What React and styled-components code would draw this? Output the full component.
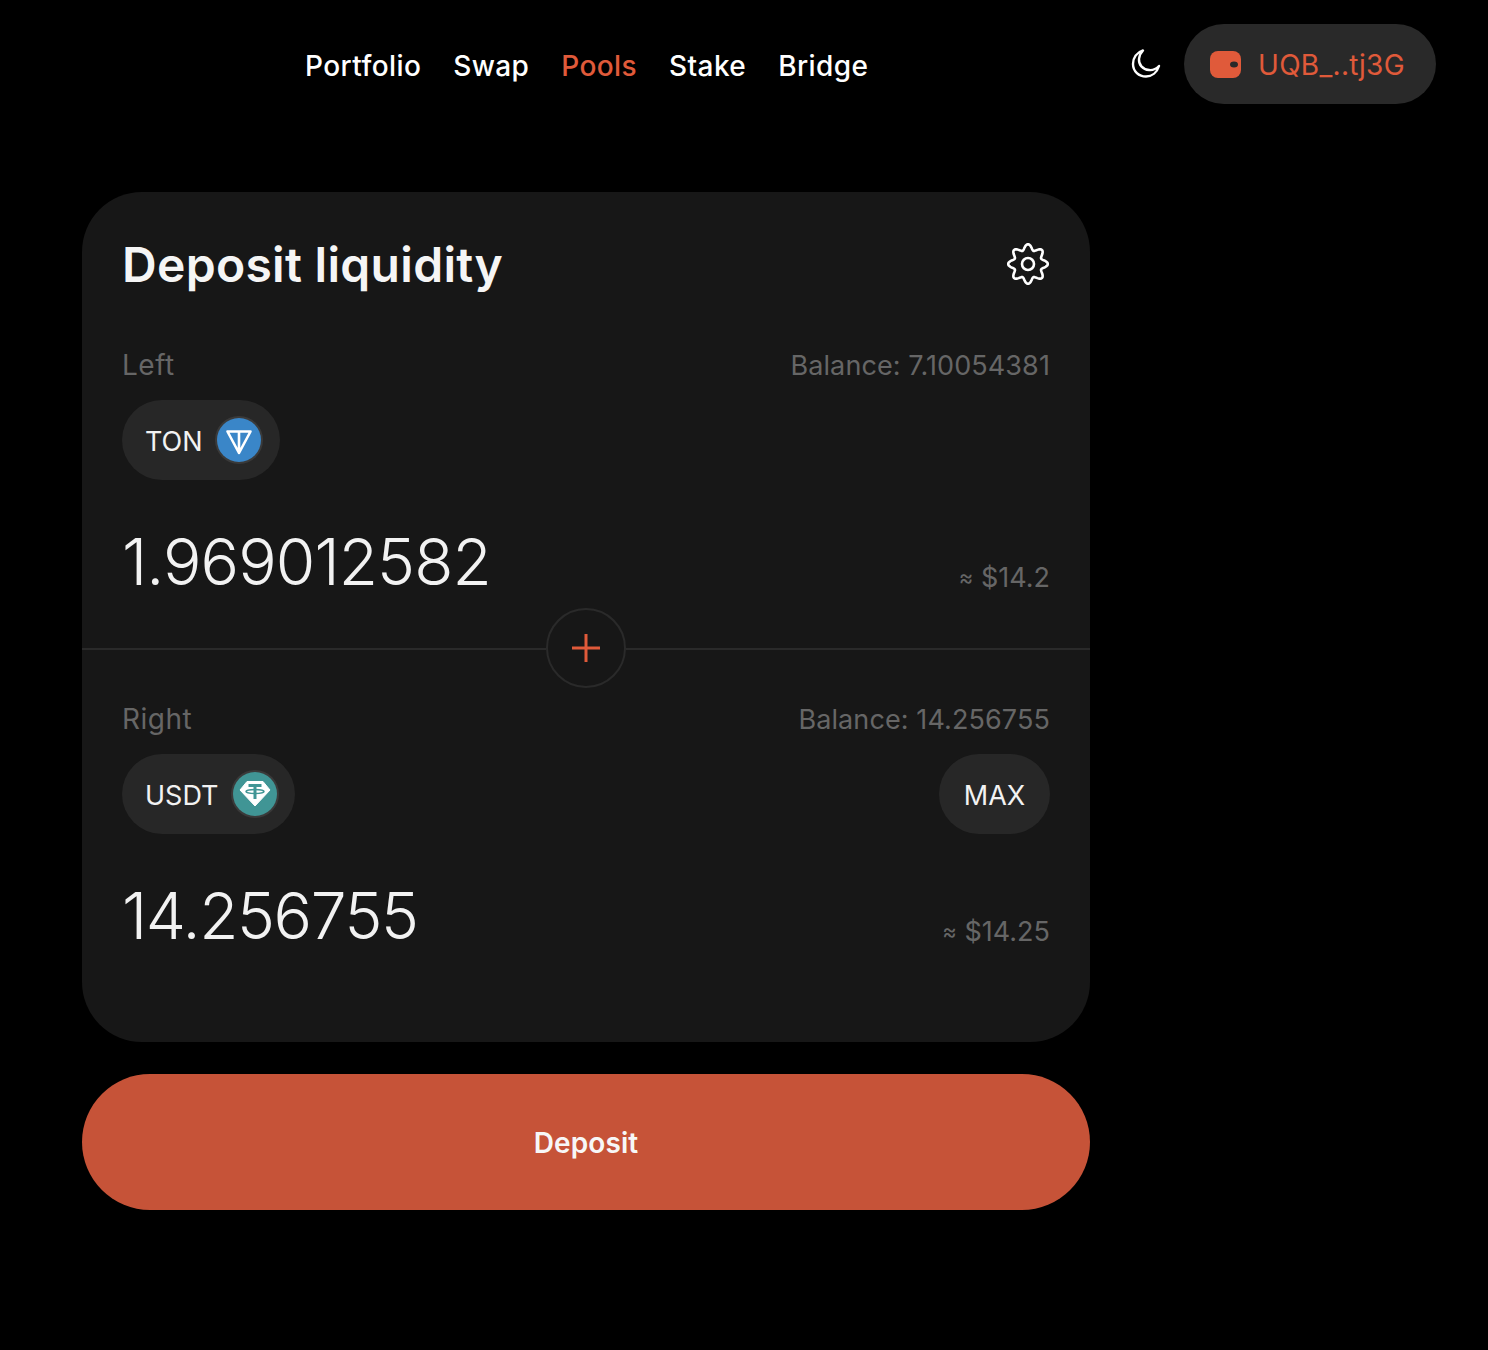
import React from 'react';
import styled, { createGlobalStyle } from 'styled-components';

const GlobalStyle = createGlobalStyle`
  html, body {
    margin: 0;
    background: #000;
  }
  body {
    font-family: Inter, "Liberation Sans", sans-serif;
    color: #fff;
  }
  * {
    box-sizing: border-box;
  }
`;

const Page = styled.div`
  width: 1488px;
  height: 1350px;
  background: #000;
`;

const Header = styled.header`
  display: flex;
  align-items: center;
  height: 128px;
  padding: 0 52px 0 305px;
`;

const Nav = styled.nav`
  display: flex;
  gap: 32px;
  flex: 1;
  margin-top: 4px;
`;

const NavLink = styled.a`
  font-size: 28px;
  font-weight: 500;
  line-height: 34px;
  letter-spacing: 0.4px;
  color: ${props => (props.$active ? '#e05a3a' : '#fff')};
`;

const ThemeButton = styled.button`
  display: flex;
  padding: 0;
  margin-right: 22px;
  background: none;
  border: none;
  color: #fff;
`;

const WalletButton = styled.button`
  display: flex;
  align-items: center;
  gap: 17px;
  width: 252px;
  height: 80px;
  padding: 0 26px;
  border: none;
  border-radius: 40px;
  background: #292929;
  color: #e05a3a;
  font-family: inherit;
  font-size: 28px;
  font-weight: 400;
  letter-spacing: 0.3px;
`;

const WalletText = styled.span`
  padding-top: 2px;
`;

const Main = styled.main`
  display: flex;
  flex-direction: column;
  gap: 32px;
  width: 1008px;
  margin: 64px 0 0 82px;
`;

const Card = styled.section`
  height: 850px;
  padding-top: 40px;
  border-radius: 60px;
  background: #171717;
`;

const Section = styled.div`
  padding: 0 40px;
`;

const TitleRow = styled.div`
  display: flex;
  justify-content: space-between;
  align-items: center;
  height: 64px;
  margin-bottom: 52px;
`;

const Title = styled.h1`
  margin: 0;
  font-size: 48px;
  font-weight: 600;
  letter-spacing: 0.3px;
  color: #f5f5f5;
`;

const GearSvg = styled.svg`
  margin-right: 1px;
`;

const LabelRow = styled.div`
  display: flex;
  justify-content: space-between;
  align-items: center;
  height: 34px;
  margin-bottom: 18px;
  color: #666;
`;

const SideLabel = styled.span`
  font-size: 28px;
  letter-spacing: 0.5px;
`;

const BalanceLabel = styled.span`
  font-size: 27px;
  letter-spacing: 0.1px;
`;

const TokenRow = styled.div`
  display: flex;
  justify-content: space-between;
  align-items: center;
  height: 80px;
`;

const TokenChip = styled.div`
  display: flex;
  align-items: center;
  gap: 12px;
  height: 80px;
  padding: 0 ${props => props.$paddingRight}px 0 23px;
  border-radius: 40px;
  background: #272727;
  font-size: 27px;
  color: #f2f2f2;
`;

const ChipLabel = styled.span`
  padding-top: 2px;
`;

const TokenIcon = styled.span`
  display: flex;
  padding: 2px;
  border-radius: 50%;
  background: #3a3a3a;
`;

const MaxButton = styled.button`
  width: 111px;
  height: 80px;
  padding: 2px 0 0;
  border: none;
  border-radius: 40px;
  background: #272727;
  color: #f2f2f2;
  font-family: inherit;
  font-size: 27px;
`;

const AmountRow = styled.div`
  display: flex;
  justify-content: space-between;
  align-items: flex-start;
  height: 82px;
  margin-top: 41px;
`;

const Amount = styled.div`
  font-size: 64px;
  font-weight: 300;
  line-height: 82px;
  letter-spacing: ${props => props.$spacing}px;
  color: #f2f2f2;
`;

const Fiat = styled.div`
  margin-top: 39px;
  font-size: 27px;
  line-height: 34px;
  color: #666;
`;

const ApproxSign = styled.span`
  font-size: 22px;
  vertical-align: 2px;
`;

const DividerRow = styled.div`
  display: flex;
  align-items: center;
  margin: 5px 0 14px;
`;

const DividerLine = styled.div`
  flex: 1;
  height: 2px;
  margin-top: 2px;
  background: #2a2a2a;
`;

const PlusCircle = styled.div`
  display: flex;
  align-items: center;
  justify-content: center;
  width: 80px;
  height: 80px;
  border: 2px solid #2a2a2a;
  border-radius: 50%;
  color: #e05a3a;
`;

const DepositButton = styled.button`
  height: 136px;
  padding: 2px 0 0;
  border: none;
  border-radius: 68px;
  background: #c65338;
  color: #f7f7f7;
  font-family: inherit;
  font-size: 28px;
  font-weight: 600;
  letter-spacing: 0.1px;
`;

const MoonIcon = () => (
  <svg width="32" height="32" viewBox="0 0 32 32" fill="none" stroke="currentColor" strokeWidth="2.4" strokeLinecap="round" strokeLinejoin="round">
    <path d="M13 2.500C6.500 4.500 3 10 3 16c0 7.500 6 12.500 13 12.500 6 0 11-4 13-10.500-3 3-6.500 4.500-10 4-6.500-.5-10.500-5.500-10-11 .3-3 1.500-6 4-8.500z" />
  </svg>
);

const WalletIcon = () => (
  <svg width="31" height="27" viewBox="0 0 31 27">
    <rect width="31" height="27" rx="8" fill="#e05a3a" />
    <ellipse cx="24" cy="13.500" rx="4" ry="3" fill="#292929" />
  </svg>
);

// wavy eight-lobed outline, same shape as the reference gear
const gearPath = () => {
  const points = [];
  for (let i = 0; i < 160; i += 1) {
    const a = (i / 160) * Math.PI * 2;
    const r = 17 + 2.8 * Math.cos(8 * a);
    points.push(`${(21 + r * Math.sin(a)).toFixed(2)} ${(21 - r * Math.cos(a)).toFixed(2)}`);
  }
  return `M${points.join('L')}Z`;
};

const GearIcon = () => (
  <GearSvg width="42" height="42" viewBox="0 0 42 42" fill="none" stroke="#fff" strokeWidth="2.600" strokeLinejoin="round">
    <path d={gearPath()} />
    <circle cx="21" cy="21" r="6" />
  </GearSvg>
);

const PlusIcon = () => (
  <svg width="28" height="28" viewBox="0 0 28 28" stroke="currentColor" strokeWidth="3">
    <path d="M0 14h28M14 0v28" />
  </svg>
);

const TonIcon = () => (
  <svg width="44" height="44" viewBox="0 0 44 44">
    <circle cx="22" cy="22" r="22" fill="#3a86c8" />
    <path d="M10.500 13.500h23L22 35zM22 13.500V35" fill="none" stroke="#fff" strokeWidth="2.600" strokeLinejoin="round" strokeLinecap="round" />
  </svg>
);

const UsdtIcon = () => (
  <svg width="44" height="44" viewBox="0 0 44 44">
    <circle cx="22" cy="22" r="22" fill="#409595" />
    <path d="M14 9.500h16L37 18 22 34 7 18z" fill="#fff" stroke="#fff" strokeLinejoin="round" />
    <path d="M15.500 13.500h13M22 13.500V27" fill="none" stroke="#409595" strokeWidth="3" />
    <ellipse cx="22" cy="19.500" rx="9" ry="2" fill="none" stroke="#409595" strokeWidth="1.500" />
  </svg>
);

const navItems = ['Portfolio', 'Swap', 'Pools', 'Stake', 'Bridge'];

const App = () => {
  return (
    <Page>
      <GlobalStyle />
      <Header>
        <Nav>
          {navItems.map(item => (
            <NavLink key={item} $active={item === 'Pools'}>{item}</NavLink>
          ))}
        </Nav>
        <ThemeButton><MoonIcon /></ThemeButton>
        <WalletButton>
          <WalletIcon />
          <WalletText>UQB_..tj3G</WalletText>
        </WalletButton>
      </Header>
      <Main>
        <Card>
          <Section>
            <TitleRow>
              <Title>Deposit liquidity</Title>
              <GearIcon />
            </TitleRow>
            <LabelRow>
              <SideLabel>Left</SideLabel>
              <BalanceLabel>Balance: 7.10054381</BalanceLabel>
            </LabelRow>
            <TokenRow>
              <TokenChip $paddingRight={17}>
                <ChipLabel>TON</ChipLabel>
                <TokenIcon><TonIcon /></TokenIcon>
              </TokenChip>
            </TokenRow>
            <AmountRow>
              <Amount $spacing={-0.9}>1.969012582</Amount>
              <Fiat><ApproxSign>≈</ApproxSign> $14.2</Fiat>
            </AmountRow>
          </Section>
          <DividerRow>
            <DividerLine />
            <PlusCircle><PlusIcon /></PlusCircle>
            <DividerLine />
          </DividerRow>
          <Section>
            <LabelRow>
              <SideLabel>Right</SideLabel>
              <BalanceLabel>Balance: 14.256755</BalanceLabel>
            </LabelRow>
            <TokenRow>
              <TokenChip $paddingRight={16}>
                <ChipLabel>USDT</ChipLabel>
                <TokenIcon><UsdtIcon /></TokenIcon>
              </TokenChip>
              <MaxButton>MAX</MaxButton>
            </TokenRow>
            <AmountRow>
              <Amount $spacing={-1.4}>14.256755</Amount>
              <Fiat><ApproxSign>≈</ApproxSign> $14.25</Fiat>
            </AmountRow>
          </Section>
        </Card>
        <DepositButton>Deposit</DepositButton>
      </Main>
    </Page>
  );
};

export default App;
